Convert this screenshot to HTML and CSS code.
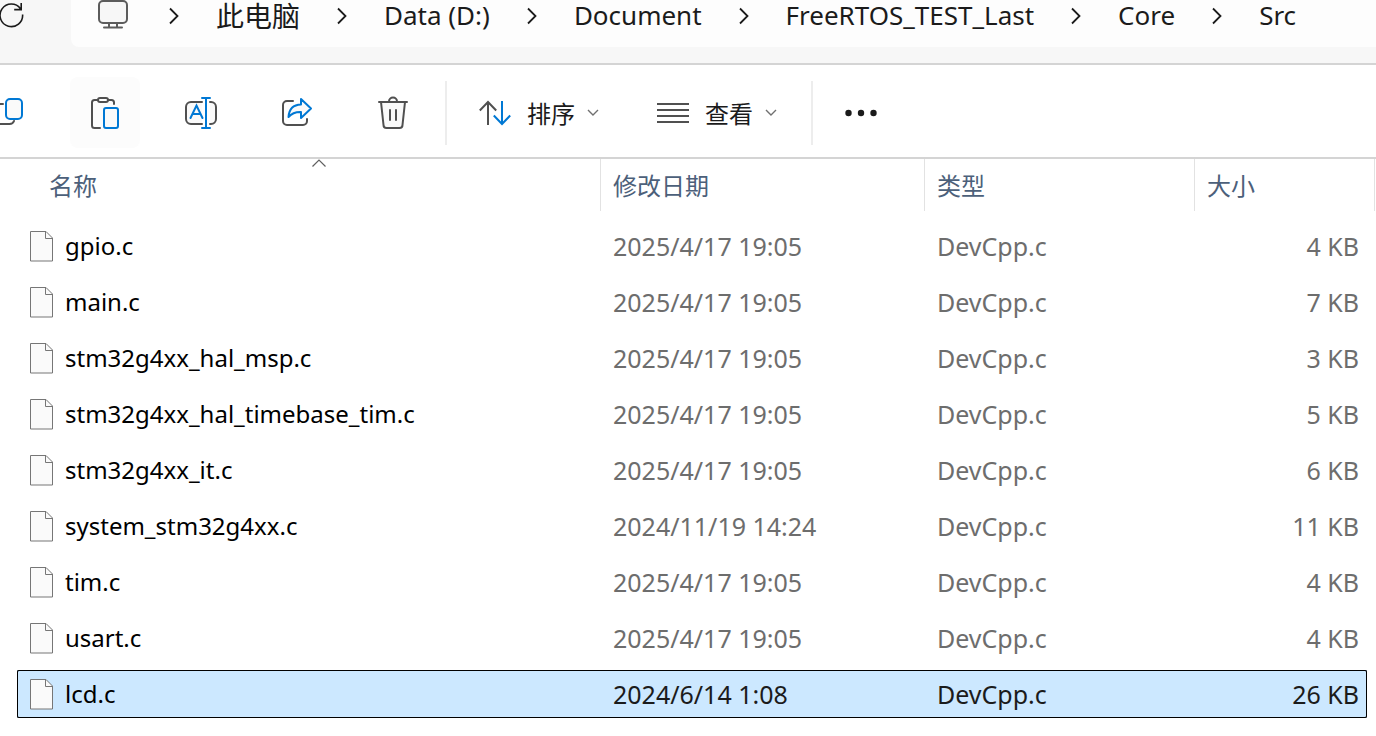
FILE: index.html
```html
<!DOCTYPE html>
<html lang="zh-CN">
<head>
<meta charset="utf-8">
<title>Src</title>
<link rel="stylesheet" href="styles.css">
</head>
<body>
<header class="topbar">
  <button class="refresh" type="button" aria-label="刷新">
    <svg width="26" height="32" viewBox="0 0 26 32" fill="none" stroke="#1b1b1b" stroke-width="1.6"><path d="M22.6 14.5A11.300 11.300 0 1 1 20.5 8.7M21.2 3v6.6h-7"/></svg>
  </button>
  <nav class="address" aria-label="地址">
    <svg class="monitor" width="30" height="32" viewBox="0 0 30 32"><rect x="1" y="1" width="28" height="22" rx="4" fill="#f7f7f7" stroke="#5c5c5c" stroke-width="2"/><path d="M11 23v4M19 23v4M6 27.5h18" fill="none" stroke="#5c5c5c" stroke-width="2" stroke-linecap="round"/></svg>
    <svg class="sep" width="10" height="18" viewBox="0 0 10 18"><path d="M1 1.500 8.500 9 1 16.500"/></svg>
    <a class="cjk" href="#">此电脑</a>
    <svg class="sep" width="10" height="18" viewBox="0 0 10 18"><path d="M1 1.500 8.500 9 1 16.500"/></svg>
    <a href="#">Data (D:)</a>
    <svg class="sep" width="10" height="18" viewBox="0 0 10 18"><path d="M1 1.500 8.500 9 1 16.500"/></svg>
    <a href="#">Document</a>
    <svg class="sep" width="10" height="18" viewBox="0 0 10 18"><path d="M1 1.500 8.500 9 1 16.500"/></svg>
    <a href="#">FreeRTOS_TEST_Last</a>
    <svg class="sep" width="10" height="18" viewBox="0 0 10 18"><path d="M1 1.500 8.500 9 1 16.500"/></svg>
    <a href="#">Core</a>
    <svg class="sep" width="10" height="18" viewBox="0 0 10 18"><path d="M1 1.500 8.500 9 1 16.500"/></svg>
    <a href="#">Src</a>
  </nav>
</header>

<div class="toolbar" role="toolbar">
  <div class="tools">
    <button class="tool" type="button" aria-label="复制">
      <svg width="32" height="32" viewBox="0 0 32 32" fill="none" stroke-width="2" stroke-linecap="round"><path d="M10 7H6a4 4 0 0 0-4 4v11a5 5 0 0 0 5 5h9.500q3.500 0 4.500-3" stroke="#505050"/><rect x="13" y="2" width="16" height="20" rx="4" fill="#fafafa" stroke="#0078d4"/></svg>
    </button>
    <button class="tool tool-active" type="button" aria-label="粘贴">
      <svg width="32" height="34" viewBox="0 0 32 34" fill="none" stroke-width="2" stroke-linecap="round"><path d="M9 4H5.500A2.500 2.500 0 0 0 3 6.500v23A2.500 2.500 0 0 0 5.500 32H11M19 4h3.500A2.500 2.500 0 0 1 25 6.500V8" stroke="#505050"/><rect x="9" y="2" width="10" height="4" rx="2" fill="#fff" stroke="#505050"/><rect x="15" y="12" width="14" height="20" rx="2" fill="#fafafa" stroke="#0078d4"/></svg>
    </button>
    <button class="tool" type="button" aria-label="重命名">
      <svg width="32" height="34" viewBox="0 0 32 34" fill="none" stroke-width="2" stroke-linecap="round"><path d="M17 6H6a5 5 0 0 0-5 5v12a5 5 0 0 0 5 5h11M25 6h1a5 5 0 0 1 5 5v12a5 5 0 0 1-5 5h-1" fill="#fafafa" stroke="#505050"/><path d="M17 2h8M17 32h8M21 2v30M5.500 22l6-12.500 6 12.500M8 18h7" stroke="#0078d4"/></svg>
    </button>
    <button class="tool" type="button" aria-label="共享">
      <svg width="32" height="32" viewBox="0 0 32 32" fill="none" stroke-width="2" stroke-linecap="round" stroke-linejoin="round"><path d="M12 4H6a4 4 0 0 0-4 4v16a4 4 0 0 0 4 4h16a4 4 0 0 0 4-4v-2" stroke="#505050"/><path d="M20 2l10 9.500L20 21v-6c-6-.2-9 1-12.500 5C8 12 12 7.800 20 7.500z" fill="#fafafa" stroke="#0078d4"/></svg>
    </button>
    <button class="tool" type="button" aria-label="删除">
      <svg width="32" height="34" viewBox="0 0 32 34" fill="none" stroke="#505050" stroke-width="2" stroke-linecap="round" stroke-linejoin="round"><path d="M4 6l2.500 23a3 3 0 0 0 3 3h13a3 3 0 0 0 3-3L28 6" fill="#fafafa"/><path d="M2 6h28M12 5.500a4 4 0 0 1 8 0M13 14v10M19 14v10"/></svg>
    </button>
  </div>
  <span class="divider"></span>
  <button class="menu" type="button">
    <svg width="32" height="26" viewBox="0 0 32 26" fill="none" stroke-width="2"><path d="M9 25V2M.800 10.500 9 2l8.200 8.500" stroke="#505050"/><path d="M23 1v23M14.800 15.500 23 24l8.200-8.500" stroke="#0078d4"/></svg>
    <span>排序</span>
    <svg width="12" height="8" viewBox="0 0 12 8" fill="none" stroke="#707070" stroke-width="1.400"><path d="M1 1l5 5 5-5"/></svg>
  </button>
  <button class="menu" type="button">
    <svg width="32" height="22" viewBox="0 0 32 22" stroke="#505050" stroke-width="2"><path d="M0 2h32M0 8h32M0 14h32M0 20h32"/></svg>
    <span>查看</span>
    <svg width="12" height="8" viewBox="0 0 12 8" fill="none" stroke="#707070" stroke-width="1.400"><path d="M1 1l5 5 5-5"/></svg>
  </button>
  <span class="divider divider-end"></span>
  <button class="more" type="button" aria-label="更多">
    <svg width="32" height="8" viewBox="0 0 32 8" fill="#1b1b1b"><circle cx="3.500" cy="4" r="3.200"/><circle cx="16" cy="4" r="3.200"/><circle cx="28.500" cy="4" r="3.200"/></svg>
  </button>
</div>

<svg class="defs" width="0" height="0" aria-hidden="true"><symbol id="file" viewBox="0 0 24 31"><path d="M.5.5h15.500l6.500 6.500v23H.5z" fill="#fafafa" stroke="#767676"/><path d="M15.500.5v7H23" fill="none" stroke="#767676"/></symbol></svg>

<main>
<table class="files">
  <colgroup><col><col class="c-date"><col class="c-type"><col class="c-size"><col class="c-end"></colgroup>
  <thead>
    <tr>
      <th scope="col"><span class="head head-name">名称<svg class="sorted" width="14" height="8" viewBox="0 0 14 8" fill="none" stroke="#606060" stroke-width="1.200"><path d="M.500 7.500 7 1l6.500 6.500"/></svg></span></th>
      <th scope="col"><span class="head">修改日期</span></th>
      <th scope="col"><span class="head">类型</span></th>
      <th scope="col"><span class="head">大小</span></th>
      <td class="end"><span class="head head-end"></span></td>
    </tr>
  </thead>
  <tbody>
    <tr><td><a class="file" href="#"><svg width="24" height="31"><use href="#file"/></svg>gpio.c</a></td><td>2025/4/17 19:05</td><td>DevCpp.c</td><td>4 KB</td></tr>
    <tr><td><a class="file" href="#"><svg width="24" height="31"><use href="#file"/></svg>main.c</a></td><td>2025/4/17 19:05</td><td>DevCpp.c</td><td>7 KB</td></tr>
    <tr><td><a class="file" href="#"><svg width="24" height="31"><use href="#file"/></svg>stm32g4xx_hal_msp.c</a></td><td>2025/4/17 19:05</td><td>DevCpp.c</td><td>3 KB</td></tr>
    <tr><td><a class="file" href="#"><svg width="24" height="31"><use href="#file"/></svg>stm32g4xx_hal_timebase_tim.c</a></td><td>2025/4/17 19:05</td><td>DevCpp.c</td><td>5 KB</td></tr>
    <tr><td><a class="file" href="#"><svg width="24" height="31"><use href="#file"/></svg>stm32g4xx_it.c</a></td><td>2025/4/17 19:05</td><td>DevCpp.c</td><td>6 KB</td></tr>
    <tr><td><a class="file" href="#"><svg width="24" height="31"><use href="#file"/></svg>system_stm32g4xx.c</a></td><td>2024/11/19 14:24</td><td>DevCpp.c</td><td>11 KB</td></tr>
    <tr><td><a class="file" href="#"><svg width="24" height="31"><use href="#file"/></svg>tim.c</a></td><td>2025/4/17 19:05</td><td>DevCpp.c</td><td>4 KB</td></tr>
    <tr><td><a class="file" href="#"><svg width="24" height="31"><use href="#file"/></svg>usart.c</a></td><td>2025/4/17 19:05</td><td>DevCpp.c</td><td>4 KB</td></tr>
    <tr class="selected"><td><a class="file" href="#"><svg width="24" height="31"><use href="#file"/></svg>lcd.c</a></td><td>2024/6/14 1:08</td><td>DevCpp.c</td><td>26 KB</td></tr>
  </tbody>
</table>
</main>
</body>
</html>
```
FILE: styles.css
```css
* { box-sizing: border-box; }
body {
  margin: 0;
  background: #fff;
  color: #1b1b1b;
  font-family: "Noto Sans", "Noto Sans CJK SC", sans-serif;
  overflow-x: hidden;
}
svg { display: block; flex: none; }
button {
  border: 0;
  padding: 0;
  background: none;
  color: inherit;
  font: inherit;
}
a { color: inherit; text-decoration: none; }
.defs { position: absolute; }

/* Address bar */
.topbar {
  display: flex;
  align-items: flex-start;
  background: #f7f7f7;
  border-bottom: 2px solid #d4d4d4;
  padding-bottom: 16px;
}
.refresh { width: 71px; flex: none; }
.address {
  flex: 1;
  display: flex;
  align-items: center;
  gap: 37px;
  height: 47px;
  padding: 0 27px 16px;
  background: #fdfdfd;
  border-bottom-left-radius: 8px;
  font-size: 26px;
  line-height: 31px;
  white-space: nowrap;
}
.address .cjk { font-family: "Noto Sans CJK SC", sans-serif; font-size: 28px; }
.monitor { margin-right: 4px; }
.sep { fill: none; stroke: #1b1b1b; stroke-width: 1.8; }

/* Command bar */
.toolbar {
  display: flex;
  align-items: center;
  padding: 12px 0 9px;
  border-bottom: 2px solid #d4d4d4;
  font-size: 24px;
  line-height: 32px;
}
.tools { display: flex; gap: 26px; margin-left: -26px; }
.tool {
  display: grid;
  place-items: center;
  width: 70px;
  height: 71px;
  border-radius: 8px;
}
.tool-active { background: #fcfcfc; }
.divider {
  width: 2px;
  height: 64px;
  margin: 0 32px 0 17px;
  background: #ededed;
}
.menu { display: flex; align-items: center; gap: 16px; }
.menu span { margin-right: -4px; padding-top: 3px; }
.menu + .menu { margin-left: 58px; }
.divider-end { margin-left: 34px; }

/* File list */
.files {
  width: calc(100% - 18px);
  margin-left: 17px;
  table-layout: fixed;
  border-spacing: 0;
  font-size: 25px;
  color: #6d6d6d;
}
.c-date { width: 324px; }
.c-type { width: 270px; }
.c-size { width: 173px; }
.c-end { width: 8px; }
.files th, .files .end { padding: 0 0 7px; font-weight: 400; text-align: left; }
.head {
  display: block;
  height: 52px;
  padding: 0 12px;
  border-left: 1px solid #e2e2e2;
  color: #4c607a;
  font-size: 24px;
  line-height: 53px;
}
.head-name { position: relative; border-left: 0; padding-left: 32px; }
.sorted { position: absolute; top: 0; left: calc(50% + 3px); }
.head-end { border-left: 0; border-right: 1px solid #e2e2e2; padding: 0; }
.files tbody td {
  height: 56px;
  padding: 0 8px 0 13px;
  border: 0 solid transparent;
  border-width: 4px 0;
  background-clip: padding-box;
  line-height: 32px;
  white-space: nowrap;
}
.files tbody td:last-child { text-align: right; }
.file { display: flex; align-items: center; gap: 11px; color: #000; font-size: 24px; }
.selected td {
  background-color: #cce8ff;
  box-shadow: inset 0 1px #000, inset 0 -1px #000;
  color: #1b1b1b;
}
.selected td:first-child {
  border-radius: 2px 0 0 2px;
  box-shadow: inset 1px 0 #000, inset 0 1px #000, inset 0 -1px #000;
}
.selected td:last-child {
  border-radius: 0 2px 2px 0;
  box-shadow: inset -1px 0 #000, inset 0 1px #000, inset 0 -1px #000;
}
```
